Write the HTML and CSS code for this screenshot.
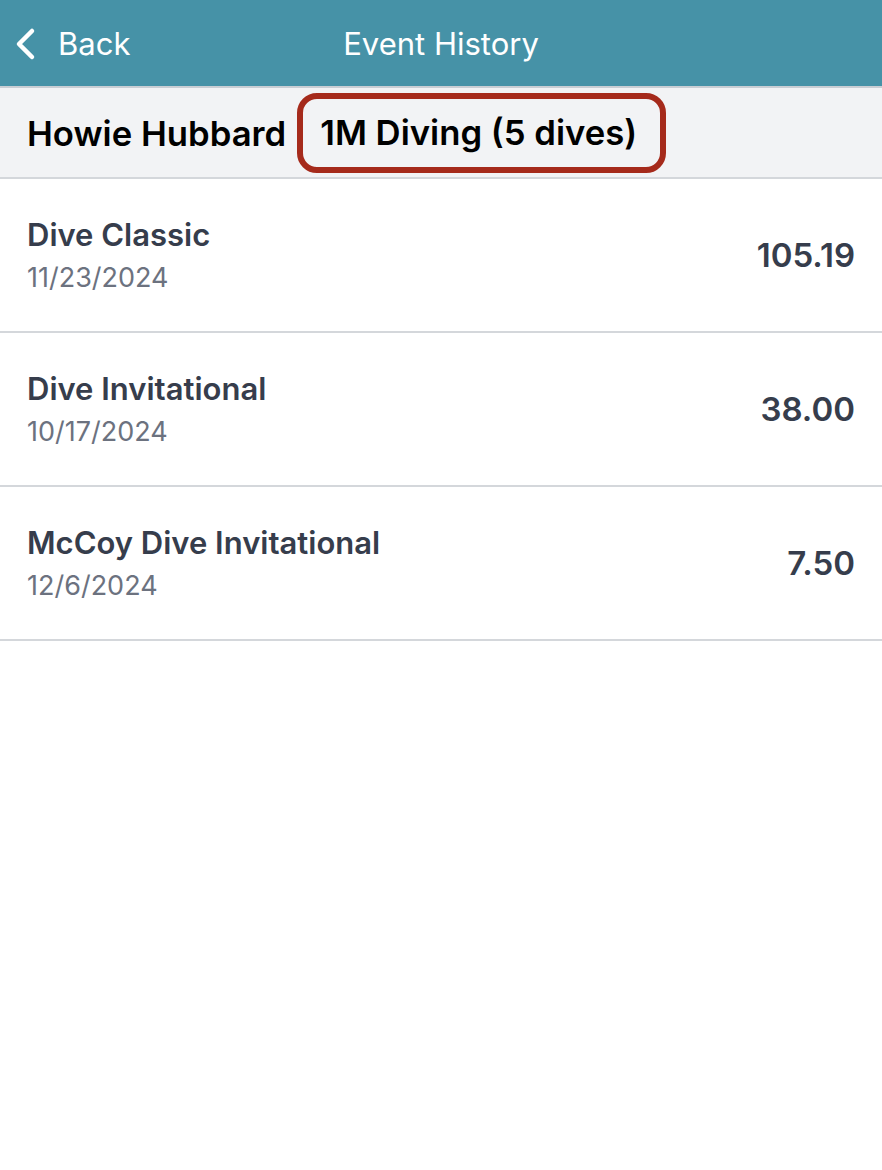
FILE: index.html
```html
<!DOCTYPE html>
<html lang="en">
<head>
    <meta charset="UTF-8">
    <meta name="viewport" content="width=device-width, initial-scale=1.0">
    <title>Event History</title>
    <link rel="stylesheet" href="styles.css">
</head>
<body>
    <div class="topbar">
        <a class="back" href="#">
            <svg width="24" height="34" viewBox="0 0 24 34"><path d="M19 4 L6 17 L19 30" fill="none" stroke="#fff" stroke-width="4.5" stroke-linecap="round" stroke-linejoin="round"/></svg>
            <span>Back</span>
        </a>
        <h1>Event History</h1>
    </div>

    <div class="subheader">
        <span class="name">Howie Hubbard</span>
        <span class="event">1M Diving (5 dives)</span>
    </div>

    <ul class="list">
        <li class="row">
            <div class="info">
                <div class="meet">Dive Classic</div>
                <div class="date">11/23/2024</div>
            </div>
            <div class="score">105.19</div>
        </li>
        <li class="row">
            <div class="info">
                <div class="meet">Dive Invitational</div>
                <div class="date">10/17/2024</div>
            </div>
            <div class="score">38.00</div>
        </li>
        <li class="row">
            <div class="info">
                <div class="meet">McCoy Dive Invitational</div>
                <div class="date">12/6/2024</div>
            </div>
            <div class="score">7.50</div>
        </li>
    </ul>
</body>
</html>
```

FILE: styles.css
```css
body {
    margin: 0;
    padding: 0;
    font-family: Inter, "Noto Sans", sans-serif;
    background: #fff;
}
.topbar {
    position: relative;
    height: 86px;
    background-color: #4692a7;
    border-bottom: 2px solid #c9ced4;
    display: flex;
    align-items: center;
    justify-content: center;
}
.topbar h1 {
    margin: 0;
    color: #fff;
    font-size: 31px;
    font-weight: 400;
}
.back {
    position: absolute;
    left: 13px;
    top: 25px;
    display: flex;
    align-items: center;
    gap: 21px;
    color: #fff;
    text-decoration: none;
    font-size: 31px;
}
.back svg {
    display: block;
}
.subheader {
    background: #f2f3f5;
    border-bottom: 2px solid #d4d7db;
    display: flex;
    align-items: center;
    padding-left: 27px;
    gap: 11px;
    box-sizing: border-box;
    height: 91px;
}
.name {
    font-size: 34.7px;
    font-weight: 600;
    color: #000;
}
.event {
    font-size: 34.7px;
    font-weight: 600;
    color: #000;
    border: 6px solid #a52a1b;
    border-radius: 20px;
    padding: 12px 23px 14px 17px;
}
.list {
    list-style: none;
    margin: 0;
    padding: 0;
}
.row {
    display: flex;
    align-items: center;
    justify-content: space-between;
    height: 152px;
    padding: 0 27px;
    border-bottom: 2px solid #d4d7db;
}
.meet {
    font-size: 31px;
    font-weight: 600;
    color: #363d4c;
}
.date {
    font-size: 27px;
    color: #6c727f;
    margin-top: 8px;
}
.score {
    font-size: 33px;
    font-weight: 600;
    color: #363d4c;
}
```
